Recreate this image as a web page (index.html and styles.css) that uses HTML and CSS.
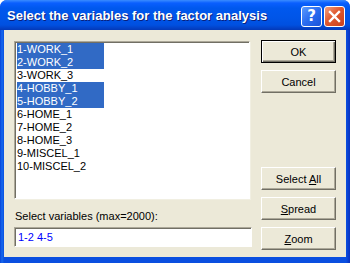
FILE: index.html
```html
<!DOCTYPE html>
<html lang="en">
<head>
    <meta charset="UTF-8">
    <title>Select the variables for the factor analysis</title>
    <link rel="stylesheet" href="styles.css">
</head>
<body>
    <div class="window">
        <div class="titlebar">
            <span class="title">Select the variables for the factor analysis</span>
            <div class="caption-buttons">
                <span class="cap-btn help">?</span>
                <span class="cap-btn close">
                    <svg width="13" height="13" viewBox="0 0 13 13">
                        <path d="M2 2 L11 11 M11 2 L2 11" stroke="#fff" stroke-width="2.4" stroke-linecap="square"/>
                    </svg>
                </span>
            </div>
        </div>

        <div class="client">
            <div class="left-col">
                <div class="listbox">
                    <div class="item selected">1-WORK_1</div>
                    <div class="item selected">2-WORK_2</div>
                    <div class="item">3-WORK_3</div>
                    <div class="item selected">4-HOBBY_1</div>
                    <div class="item selected">5-HOBBY_2</div>
                    <div class="item">6-HOME_1</div>
                    <div class="item">7-HOME_2</div>
                    <div class="item">8-HOME_3</div>
                    <div class="item">9-MISCEL_1</div>
                    <div class="item">10-MISCEL_2</div>
                </div>
                <div class="field-label">Select variables (max=2000):</div>
                <div class="textbox">1-2 4-5</div>
            </div>

            <div class="right-col">
                <div class="btn default"><span>OK</span></div>
                <div class="btn"><span>Cancel</span></div>
                <div class="spacer"></div>
                <div class="btn"><span>Select <u>A</u>ll</span></div>
                <div class="btn"><span><u>S</u>pread</span></div>
                <div class="btn"><span><u>Z</u>oom</span></div>
            </div>
        </div>
    </div>
</body>
</html>
```

FILE: styles.css
```css
body {
    margin: 0;
    width: 350px;
    height: 263px;
    overflow: hidden;
    font-family: 'Liberation Sans', Arial, sans-serif;
    font-size: 11px;
}

.window {
    width: 350px;
    height: 263px;
    box-sizing: border-box;
    border-radius: 7px 7px 0 0;
    display: flex;
    flex-direction: column;
    padding: 0 4px 6px 4px;
    background: linear-gradient(to right, #0842d8 0, #166aee 2px, #0a4fe0 4px, #0a4fe0 346px, #0831c0 350px);
}

.titlebar {
    height: 30px;
    margin: 0 -4px;
    padding: 0 5px 0 7px;
    border-radius: 7px 7px 0 0;
    display: flex;
    align-items: center;
    justify-content: space-between;
    background: linear-gradient(to bottom, #3a8cff 0, #0a5fff 3px, #0058ee 8px, #0055e8 18px, #0050e0 25px, #0342c8 28px, #0339b8 30px);
}

.title {
    color: #fff;
    font-family: 'Liberation Sans', Arial, sans-serif;
    font-weight: bold;
    font-size: 13px;
    text-shadow: 1px 1px 0 #0a1f7a;
    margin-top: 1px;
}

.caption-buttons {
    display: flex;
    gap: 2px;
    margin-top: 2px;
}

.cap-btn {
    width: 21px;
    height: 21px;
    box-sizing: border-box;
    border: 1px solid #fff;
    border-radius: 3px;
    display: flex;
    align-items: center;
    justify-content: center;
}

.help {
    background: linear-gradient(135deg, #5a9bff 0%, #2a6cf0 50%, #1a52d8 100%);
    color: #fff;
    font-family: 'DejaVu Sans', sans-serif;
    font-weight: bold;
    font-size: 15px;
}

.close {
    background: linear-gradient(135deg, #f0a080 0%, #e0582e 45%, #c8401c 100%);
}

.client {
    flex: 1;
    background: #ece9d8;
    display: flex;
    padding: 11px 0 0 10px;
}

.left-col {
    width: 238px;
    display: flex;
    flex-direction: column;
}

.listbox {
    width: 236px;
    height: 158px;
    box-sizing: border-box;
    background: #fff;
    border-top: 1px solid #aca899;
    border-left: 1px solid #aca899;
    border-right: 1px solid #fff;
    border-bottom: 1px solid #fff;
    box-shadow: inset 1px 1px 0 #716f64, 1px 1px 0 #f1efe2;
    padding: 1px 0 0 2px;
}

.item {
    width: 87px;
    height: 13px;
    line-height: 13px;
    color: #000;
    white-space: nowrap;
}

.item.selected {
    background: #316ac5;
    color: #fff;
}

.field-label {
    margin-top: 10px;
    padding-left: 1px;
    height: 14px;
    line-height: 14px;
    color: #000;
}

.textbox {
    margin-top: 4px;
    width: 238px;
    height: 20px;
    box-sizing: border-box;
    background: #fff;
    border-top: 1px solid #aca899;
    border-left: 1px solid #aca899;
    border-right: 1px solid #fff;
    border-bottom: 1px solid #fff;
    box-shadow: inset 1px 1px 0 #716f64;
    color: #0000ff;
    padding: 2px 0 0 3px;
    line-height: 14px;
}

.right-col {
    margin-left: 9px;
    margin-top: -1px;
    width: 75px;
    display: flex;
    flex-direction: column;
    gap: 7px;
}

.spacer {
    height: 60px;
}

.btn {
    width: 75px;
    height: 23px;
    box-sizing: border-box;
    background: #ece9d8;
    border-top: 1px solid #fff;
    border-left: 1px solid #fff;
    border-right: 1px solid #716f64;
    border-bottom: 1px solid #716f64;
    box-shadow: inset -1px -1px 0 #aca899;
    display: flex;
    align-items: center;
    justify-content: center;
    color: #000;
    font-size: 11px;
    padding-top: 1px;
}

.btn.default {
    border: 1px solid #000;
    box-shadow: inset 1px 1px 0 #fff, inset -1px -1px 0 #716f64, inset -2px -2px 0 #aca899;
}

u {
    text-decoration: underline;
    text-underline-offset: 1px;
}
```
